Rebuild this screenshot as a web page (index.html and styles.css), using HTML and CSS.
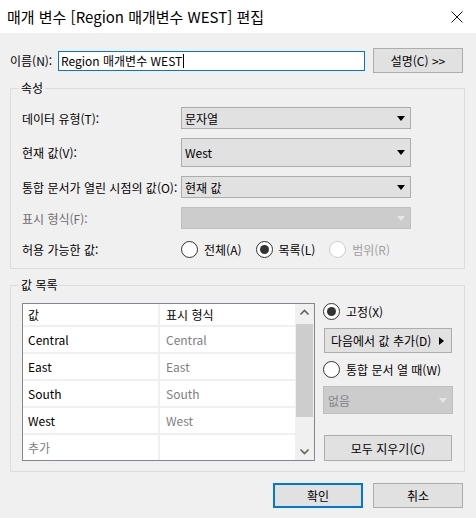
FILE: index.html
```html
<!DOCTYPE html>
<html lang="ko">
<head>
    <meta charset="UTF-8">
    <title>매개 변수 편집</title>
    <link rel="stylesheet" href="styles.css">
</head>
<body>
<div class="window">
    <div class="titlebar">
        <span class="title">매개 변수 [Region 매개변수 WEST] 편집</span>
        <svg class="close" width="12" height="12" viewBox="0 0 12 12">
            <path d="M0.5 0.5 L11.5 11.5 M11.5 0.5 L0.5 11.5" stroke="#1a1a1a" stroke-width="1" fill="none"/>
        </svg>
    </div>

    <div class="content">
        <div class="name-row">
            <label class="name-label">이름(N):</label>
            <div class="text-input">Region 매개변수 WEST<span class="caret"></span></div>
            <div class="button describe">설명(C) &gt;&gt;</div>
        </div>

        <fieldset class="group">
            <legend>속성</legend>
            <div class="props">
                <div class="prop-label">데이터 유형(T):</div>
                <div class="combo">
                    <span>문자열</span>
                    <svg width="8" height="5" viewBox="0 0 8 5"><path d="M0 0 H8 L4 5 Z" fill="#000"/></svg>
                </div>

                <div class="prop-label">현재 값(V):</div>
                <div class="combo">
                    <span>West</span>
                    <svg width="8" height="5" viewBox="0 0 8 5"><path d="M0 0 H8 L4 5 Z" fill="#000"/></svg>
                </div>

                <div class="prop-label">통합 문서가 열린 시점의 값(O):</div>
                <div class="combo">
                    <span>현재 값</span>
                    <svg width="8" height="5" viewBox="0 0 8 5"><path d="M0 0 H8 L4 5 Z" fill="#000"/></svg>
                </div>

                <div class="prop-label disabled">표시 형식(F):</div>
                <div class="combo combo-disabled">
                    <span></span>
                    <svg width="8" height="5" viewBox="0 0 8 5"><path d="M0 0 H8 L4 5 Z" fill="#e6e6e6"/></svg>
                </div>

                <div class="prop-label">허용 가능한 값:</div>
                <div class="radio-row">
                    <div class="radio-item"><span class="radio"></span>전체(A)</div>
                    <div class="radio-item"><span class="radio checked"></span>목록(L)</div>
                    <div class="radio-item disabled"><span class="radio"></span>범위(R)</div>
                </div>
            </div>
        </fieldset>

        <fieldset class="group list-group">
            <legend>값 목록</legend>
            <div class="list-area">
                <div class="listbox">
                    <div class="list-table">
                        <div class="list-row header">
                            <div class="cell">값</div>
                            <div class="cell">표시 형식</div>
                        </div>
                        <div class="list-row">
                            <div class="cell">Central</div>
                            <div class="cell alias">Central</div>
                        </div>
                        <div class="list-row">
                            <div class="cell">East</div>
                            <div class="cell alias">East</div>
                        </div>
                        <div class="list-row">
                            <div class="cell">South</div>
                            <div class="cell alias">South</div>
                        </div>
                        <div class="list-row">
                            <div class="cell">West</div>
                            <div class="cell alias">West</div>
                        </div>
                        <div class="list-row">
                            <div class="cell alias">추가</div>
                            <div class="cell"></div>
                        </div>
                    </div>
                    <div class="scrollbar">
                        <svg class="arrow" width="19" height="17" viewBox="0 0 19 17">
                            <path d="M5.5 10.5 L9.5 6.5 L13.5 10.5" stroke="#606060" stroke-width="1.6" fill="none"/>
                        </svg>
                        <div class="track"><div class="thumb"></div></div>
                        <svg class="arrow" width="19" height="17" viewBox="0 0 19 17">
                            <path d="M5.5 6.5 L9.5 10.5 L13.5 6.5" stroke="#606060" stroke-width="1.6" fill="none"/>
                        </svg>
                    </div>
                </div>

                <div class="list-side">
                    <div class="radio-item"><span class="radio checked"></span>고정(X)</div>
                    <div class="button add-from">
                        <span>다음에서 값 추가(D)</span>
                        <svg width="5" height="8" viewBox="0 0 5 8"><path d="M0 0 L5 4 L0 8 Z" fill="#000"/></svg>
                    </div>
                    <div class="radio-item"><span class="radio"></span>통합 문서 열 때(W)</div>
                    <div class="combo combo-disabled side-combo">
                        <span>없음</span>
                        <svg width="8" height="5" viewBox="0 0 8 5"><path d="M0 0 H8 L4 5 Z" fill="#e6e6e6"/></svg>
                    </div>
                    <div class="button clear-all">모두 지우기(C)</div>
                </div>
            </div>
        </fieldset>

        <div class="footer">
            <div class="button ok">확인</div>
            <div class="button">취소</div>
        </div>
    </div>
</div>
</body>
</html>
```

FILE: styles.css
```css
body {
    margin: 0;
    font-family: "Noto Sans CJK KR", "Noto Sans", sans-serif;
    font-size: 12px;
    color: #000;
    background: #f0f0f0;
}
.window {
    width: 476px;
    height: 518px;
    background: #f0f0f0;
    overflow: hidden;
}
.titlebar {
    height: 33px;
    background: #fff;
    display: flex;
    align-items: center;
    justify-content: space-between;
    padding: 0 13px 0 7px;
}
.title {
    font-size: 15px;
}
.close {
    margin-top: 1px;
}
.content {
    padding: 0 11px 0 10px;
}

/* name row */
.name-row {
    display: flex;
    align-items: center;
    height: 25px;
    margin-top: 15px;
}
.name-label {
    width: 48px;
}
.text-input {
    box-sizing: border-box;
    width: 307px;
    height: 20px;
    border: 1px solid #0078d7;
    background: #fff;
    padding-left: 2px;
    line-height: 17px;
    display: flex;
    align-items: center;
}
.caret {
    display: inline-block;
    width: 1px;
    height: 14px;
    background: #000;
    margin-left: 1px;
}
.button {
    box-sizing: border-box;
    height: 25px;
    border: 1px solid #adadad;
    background: #e1e1e1;
    display: flex;
    align-items: center;
    justify-content: center;
}
.describe {
    width: 90px;
    margin-left: 8px;
}

/* group boxes */
.group {
    margin: 7px 0 0 0;
    padding: 11px 11px 8px 11px;
    border: 1px solid #dcdcdc;
    min-width: 0;
}
.group legend {
    padding: 0 2px;
    margin-left: -3px;
    line-height: 16px;
}
.props {
    display: grid;
    grid-template-columns: 159px 230px;
    grid-template-rows: 22px 29px 22px 22px 22px;
    row-gap: 9px;
    align-items: center;
}
.prop-label.disabled {
    color: #6d6d6d;
}
.combo {
    box-sizing: border-box;
    height: 100%;
    border: 1px solid #adadad;
    background: #e1e1e1;
    display: flex;
    align-items: center;
    justify-content: space-between;
    padding: 0 5px 0 3px;
}
.combo-disabled {
    background: #cccccc;
    border-color: #bfbfbf;
    color: #838383;
}
.radio-row {
    display: flex;
    gap: 14px;
}
.radio-item {
    display: flex;
    align-items: center;
    gap: 6px;
    height: 16px;
}
.radio-item.disabled {
    color: #a0a0a0;
}
.radio {
    box-sizing: border-box;
    width: 17px;
    height: 17px;
    border: 1px solid #333;
    border-radius: 50%;
    background: #fff;
    display: flex;
    align-items: center;
    justify-content: center;
}
.radio.checked::after {
    content: "";
    width: 9px;
    height: 9px;
    border-radius: 50%;
    background: #333;
}
.radio-item.disabled .radio {
    border-color: #cccccc;
}

/* value list */
.list-group {
    margin-top: 8px;
    padding: 10px 11px 10px 11px;
}
.list-area {
    display: flex;
    align-items: flex-start;
}
.listbox {
    box-sizing: border-box;
    width: 293px;
    height: 158px;
    border: 1px solid #828790;
    background: #fff;
    display: flex;
    overflow: hidden;
}
.list-table {
    width: 272px;
}
.list-row {
    box-sizing: border-box;
    display: flex;
    height: 27px;
    border-bottom: 2px solid #f0f0f0;
}
.list-row.header {
    height: 23px;
}
.cell {
    display: flex;
    align-items: center;
    padding-left: 5px;
}
.cell:first-child {
    width: 130px;
    border-right: 2px solid #f0f0f0;
}
.cell + .cell {
    padding-left: 6px;
}
.cell.alias {
    color: #808080;
}
.scrollbar {
    width: 19px;
    display: flex;
    flex-direction: column;
    background: #f0f0f0;
}
.track {
    flex: 1;
    padding: 3px 1px 0 1px;
}
.thumb {
    height: 93px;
    background: #cdcdcd;
}
.list-side {
    margin-left: 8px;
    width: 130px;
    display: flex;
    flex-direction: column;
}
.add-from {
    width: 128px;
    margin: 9px 0 8px 1px;
    justify-content: space-between;
    padding: 0 7px 0 6px;
}
.side-combo {
    height: 28px;
    margin-top: 9px;
    padding-left: 4px;
}
.clear-all {
    width: 128px;
    height: 26px;
    margin: 21px 0 0 1px;
}

/* footer */
.footer {
    display: flex;
    justify-content: flex-end;
    gap: 10px;
    margin: 11px 2px 0 0;
}
.footer .button {
    width: 90px;
}
.button.ok {
    border: 2px solid #0078d7;
}
```
